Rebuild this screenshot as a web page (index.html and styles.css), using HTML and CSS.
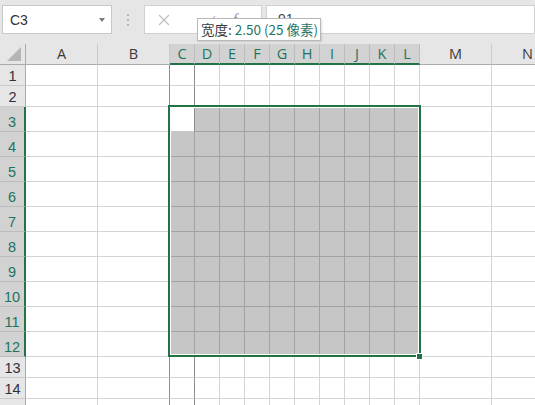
FILE: index.html
```html
<!DOCTYPE html>
<html lang="zh">
<head>
<meta charset="utf-8">
<title>Sheet</title>
<link rel="stylesheet" href="styles.css">
</head>
<body>
<div class="toolbar">
  <div class="namebox"><span class="ref">C3</span><span class="caret"></span></div>
  <div class="grip"><i></i><i></i><i></i></div>
  <div class="fbtns">
    <svg class="ic-x" width="12" height="12" viewBox="0 0 12 12"><path d="M1 1L11 11M11 1L1 11" stroke="#bfbfbf" stroke-width="1.3" fill="none"/></svg>
    <svg class="ic-ok" width="12" height="12" viewBox="0 0 12 12"><path d="M1 7L4.5 10.5L11 2" stroke="#c4c4c4" stroke-width="1.3" fill="none"/></svg>
    <span class="fx">f</span>
  </div>
  <div class="formula"><span class="fval">91</span></div>
  <div class="tip">宽度: <span class="tipv">2.50 (25 像素)</span></div>
</div>
<div class="sheet">
  <div class="row head">
    <div class="corner"><svg width="15" height="15" viewBox="0 0 15 15"><path d="M14 0V14H0Z" fill="#b5b5b5"/></svg></div>
    <div class="ch">A</div><div class="ch">B</div>
    <div class="ch sel">C</div><div class="ch sel">D</div><div class="ch sel">E</div><div class="ch sel">F</div><div class="ch sel">G</div><div class="ch sel">H</div><div class="ch sel">I</div><div class="ch sel">J</div><div class="ch sel">K</div><div class="ch sel">L</div>
    <div class="ch">M</div><div class="ch">N</div>
  </div>
  <div class="row">
    <div class="rh">1</div><div class="c"></div><div class="c dk"></div><div class="c dk"></div>
    <div class="c"></div><div class="c"></div><div class="c"></div><div class="c"></div><div class="c"></div><div class="c"></div><div class="c"></div><div class="c"></div><div class="c"></div>
    <div class="c"></div><div class="c"></div>
  </div>
  <div class="row">
    <div class="rh">2</div><div class="c"></div><div class="c dk"></div><div class="c dk"></div>
    <div class="c"></div><div class="c"></div><div class="c"></div><div class="c"></div><div class="c"></div><div class="c"></div><div class="c"></div><div class="c"></div><div class="c"></div>
    <div class="c"></div><div class="c"></div>
  </div>
  <div class="row t">
    <div class="rh sel">3</div><div class="c"></div><div class="c"></div><div class="c a"></div>
    <div class="c s"></div><div class="c s"></div><div class="c s"></div><div class="c s"></div><div class="c s"></div><div class="c s"></div><div class="c s"></div><div class="c s"></div><div class="c s"></div>
    <div class="c"></div><div class="c"></div>
  </div>
  <div class="row t">
    <div class="rh sel">4</div><div class="c"></div><div class="c"></div><div class="c s"></div>
    <div class="c s"></div><div class="c s"></div><div class="c s"></div><div class="c s"></div><div class="c s"></div><div class="c s"></div><div class="c s"></div><div class="c s"></div><div class="c s"></div>
    <div class="c"></div><div class="c"></div>
  </div>
  <div class="row t">
    <div class="rh sel">5</div><div class="c"></div><div class="c"></div><div class="c s"></div>
    <div class="c s"></div><div class="c s"></div><div class="c s"></div><div class="c s"></div><div class="c s"></div><div class="c s"></div><div class="c s"></div><div class="c s"></div><div class="c s"></div>
    <div class="c"></div><div class="c"></div>
  </div>
  <div class="row t">
    <div class="rh sel">6</div><div class="c"></div><div class="c"></div><div class="c s"></div>
    <div class="c s"></div><div class="c s"></div><div class="c s"></div><div class="c s"></div><div class="c s"></div><div class="c s"></div><div class="c s"></div><div class="c s"></div><div class="c s"></div>
    <div class="c"></div><div class="c"></div>
  </div>
  <div class="row t">
    <div class="rh sel">7</div><div class="c"></div><div class="c"></div><div class="c s"></div>
    <div class="c s"></div><div class="c s"></div><div class="c s"></div><div class="c s"></div><div class="c s"></div><div class="c s"></div><div class="c s"></div><div class="c s"></div><div class="c s"></div>
    <div class="c"></div><div class="c"></div>
  </div>
  <div class="row t">
    <div class="rh sel">8</div><div class="c"></div><div class="c"></div><div class="c s"></div>
    <div class="c s"></div><div class="c s"></div><div class="c s"></div><div class="c s"></div><div class="c s"></div><div class="c s"></div><div class="c s"></div><div class="c s"></div><div class="c s"></div>
    <div class="c"></div><div class="c"></div>
  </div>
  <div class="row t">
    <div class="rh sel">9</div><div class="c"></div><div class="c"></div><div class="c s"></div>
    <div class="c s"></div><div class="c s"></div><div class="c s"></div><div class="c s"></div><div class="c s"></div><div class="c s"></div><div class="c s"></div><div class="c s"></div><div class="c s"></div>
    <div class="c"></div><div class="c"></div>
  </div>
  <div class="row t">
    <div class="rh sel">10</div><div class="c"></div><div class="c"></div><div class="c s"></div>
    <div class="c s"></div><div class="c s"></div><div class="c s"></div><div class="c s"></div><div class="c s"></div><div class="c s"></div><div class="c s"></div><div class="c s"></div><div class="c s"></div>
    <div class="c"></div><div class="c"></div>
  </div>
  <div class="row t">
    <div class="rh sel">11</div><div class="c"></div><div class="c"></div><div class="c s"></div>
    <div class="c s"></div><div class="c s"></div><div class="c s"></div><div class="c s"></div><div class="c s"></div><div class="c s"></div><div class="c s"></div><div class="c s"></div><div class="c s"></div>
    <div class="c"></div><div class="c"></div>
  </div>
  <div class="row t">
    <div class="rh sel">12</div><div class="c"></div><div class="c"></div><div class="c s"></div>
    <div class="c s"></div><div class="c s"></div><div class="c s"></div><div class="c s"></div><div class="c s"></div><div class="c s"></div><div class="c s"></div><div class="c s"></div><div class="c s"></div>
    <div class="c"></div><div class="c"></div>
  </div>
  <div class="row">
    <div class="rh">13</div><div class="c"></div><div class="c dk"></div><div class="c dk"></div>
    <div class="c"></div><div class="c"></div><div class="c"></div><div class="c"></div><div class="c"></div><div class="c"></div><div class="c"></div><div class="c"></div><div class="c"></div>
    <div class="c"></div><div class="c"></div>
  </div>
  <div class="row">
    <div class="rh">14</div><div class="c"></div><div class="c dk"></div><div class="c dk"></div>
    <div class="c"></div><div class="c"></div><div class="c"></div><div class="c"></div><div class="c"></div><div class="c"></div><div class="c"></div><div class="c"></div><div class="c"></div>
    <div class="c"></div><div class="c"></div>
  </div>
  <div class="row">
    <div class="rh"></div><div class="c"></div><div class="c dk"></div><div class="c dk"></div>
    <div class="c"></div><div class="c"></div><div class="c"></div><div class="c"></div><div class="c"></div><div class="c"></div><div class="c"></div><div class="c"></div><div class="c"></div>
    <div class="c"></div><div class="c"></div>
  </div>
  <div class="selection"></div>
  <div class="handle"></div>
</div>
</body>
</html>
```
FILE: styles.css
```css
* { box-sizing: border-box; margin: 0; padding: 0; }
body {
  width: 535px;
  height: 405px;
  overflow: hidden;
  background: #e6e6e6;
  font-family: "Liberation Sans", Arial, sans-serif;
  color: #444;
}
.toolbar {
  position: relative;
  height: 44px;
  display: flex;
  align-items: flex-start;
  padding: 5px 0 0 2px;
}
.namebox {
  width: 110px;
  height: 29px;
  background: #fff;
  border: 1px solid #c8c8c8;
  display: flex;
  align-items: center;
  justify-content: space-between;
  padding: 0 6px 0 7px;
  font-size: 14px;
  color: #333;
}
.caret {
  width: 0;
  height: 0;
  border-left: 3.5px solid transparent;
  border-right: 3.5px solid transparent;
  border-top: 4px solid #7a7a7a;
}
.grip {
  width: 32px;
  display: flex;
  flex-direction: column;
  align-items: center;
  gap: 3px;
  padding-top: 9px;
}
.grip i {
  display: block;
  width: 2px;
  height: 2px;
  background: #b4b4b4;
}
.fbtns {
  width: 118px;
  height: 29px;
  background: #fff;
  border: 1px solid #d0d0d0;
  display: flex;
  align-items: center;
  padding-left: 13px;
}
.ic-ok { margin-left: 34px; }
.fx {
  margin-left: 17px;
  font-family: "Liberation Serif", serif;
  font-style: italic;
  font-size: 15px;
  color: #8a8a8a;
}
.formula {
  flex: 1;
  margin-left: 4px;
  height: 29px;
  background: #fff;
  border: 1px solid #d0d0d0;
  padding: 5px 0 0 11px;
  font-size: 14px;
  line-height: 16px;
  color: #444;
}
.tip {
  position: absolute;
  left: 197px;
  top: 18px;
  width: 124px;
  height: 23px;
  background: #fff;
  border: 1px solid #b8b8b8;
  box-shadow: 1px 1px 2px rgba(0,0,0,0.12);
  font-family: "Noto Sans CJK SC", "Noto Sans", sans-serif;
  font-size: 13.5px;
  line-height: 21px;
  padding-left: 3px;
  white-space: nowrap;
  color: #3c3c3c;
}
.tipv { color: #1f7566; }

.sheet {
  position: relative;
  background: #fff;
  width: 535px;
  overflow: hidden;
}
.row {
  display: grid;
  grid-template-columns: 26px 72px 72px repeat(10, 25px) 72px 72px;
  height: 21px;
}
.row.t { height: 25px; }
.row.head { height: 21px; }

.corner {
  background: #e6e6e6;
  border-right: 1px solid #ababab;
  border-bottom: 1px solid #ababab;
  display: flex;
  align-items: flex-end;
  justify-content: flex-end;
  padding: 0 3px 2px 0;
}
.ch {
  background: #e6e6e6;
  border-right: 1px solid #cbcbcb;
  border-bottom: 1px solid #ababab;
  text-align: center;
  font-family: "Open Sans", "Liberation Sans", sans-serif;
  font-size: 14.5px;
  line-height: 20px;
  color: #3a3a3a;
}
.ch.sel {
  background: #d2d2d2;
  border-right-color: #bcbcbc;
  border-bottom: 2px solid #217346;
  color: #1f7360;
  line-height: 19px;
}
.rh {
  background: #e6e6e6;
  border-right: 1px solid #ababab;
  border-bottom: 1px solid #cbcbcb;
  display: flex;
  align-items: flex-end;
  justify-content: center;
  font-size: 14.5px;
  line-height: 16px;
  padding-bottom: 1px;
  color: #2f2f3a;
}
.rh.sel {
  background: #d2d2d2;
  border-right: 2px solid #217346;
  border-bottom-color: #bcbcbc;
  color: #1f7360;
}
.c {
  background: #fff;
  border-right: 1px solid #d4d4d4;
  border-bottom: 1px solid #d4d4d4;
}
.c.dk { border-right-color: #8e8e8e; }
.c.s {
  background: #c6c6c6;
  border-color: #a2a2a2;
}
.c.a {
  background: #fff;
  border-right-color: #8e8e8e;
  border-bottom-color: #c6c6c6;
}
.selection {
  position: absolute;
  left: 168px;
  top: 61px;
  width: 253px;
  height: 252px;
  border: 2px solid #217346;
  box-shadow: inset 0 0 0 1px #fff;
  pointer-events: none;
}
.handle {
  position: absolute;
  left: 416px;
  top: 309px;
  width: 7px;
  height: 7px;
  background: #217346;
  border: 1px solid #fff;
}
```
